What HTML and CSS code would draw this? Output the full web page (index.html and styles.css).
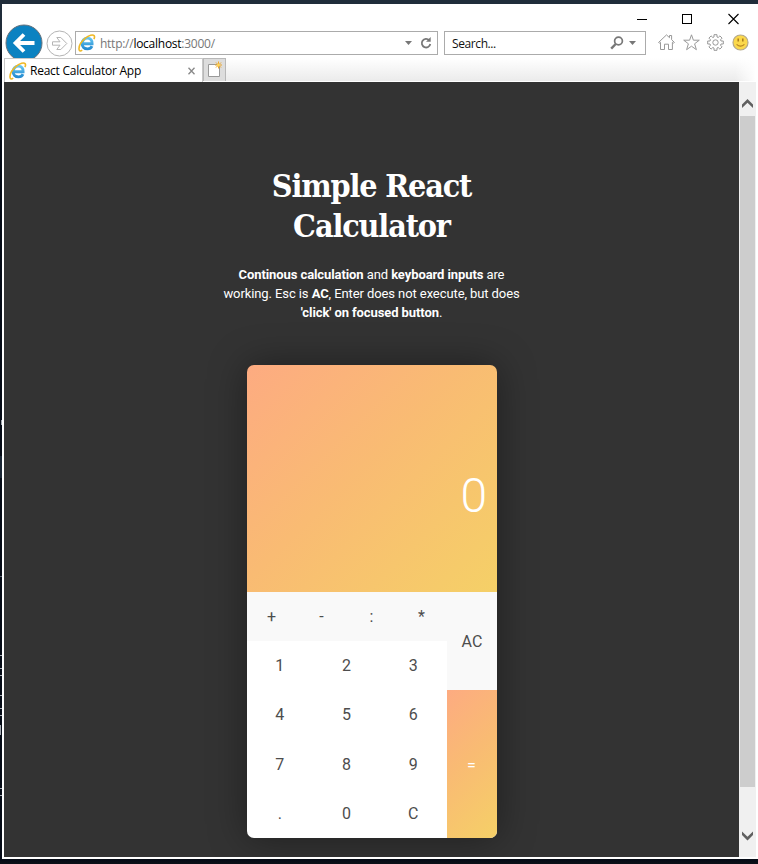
FILE: index.html
```html
<!DOCTYPE html>
<html lang="en">
<head>
<meta charset="utf-8">
<title>React Calculator App</title>
<link rel="stylesheet" href="styles.css">
</head>
<body>
<svg width="0" height="0" class="defs">
  <defs>
    <linearGradient id="ie" x1="0" y1="0" x2="0" y2="1"><stop offset="0" stop-color="#65c5f1"/><stop offset="1" stop-color="#258bd0"/></linearGradient>
    <symbol id="ie-logo" viewBox="0 0 18 18">
      <path d="M4.3 9.7H14.1C14.3 6.3 12.5 4.1 9.4 4.1C6.3 4.1 4.1 6.4 4.1 9.6C4.1 12.8 6.2 14.9 9.5 14.9C11.6 14.9 13.2 13.9 14 12.2" fill="none" stroke="url(#ie)" stroke-width="2.9"/>
      <path d="M4.2 16.1C2.5 17.4 1.1 17.2 1 15.3C.8 12.3 3.4 7.5 7.3 4.2C10.8 1.2 15 .1 16.2 1.8C16.8 2.7 16.5 3.9 15.9 5.1" fill="none" stroke="#efb927" stroke-width="1.6"/>
    </symbol>
  </defs>
</svg>
<i class="speck s1"></i><i class="speck s2"></i><i class="speck s3"></i><i class="speck s4"></i><i class="speck s5"></i><i class="speck s6"></i><i class="speck s7"></i><i class="speck s9"></i><i class="speck s8"></i>
<div class="window">
  <header class="titlebar">
    <svg width="11" height="12" viewBox="0 0 11 12"><path d="M0 6.5H10" stroke="#000"/></svg>
    <svg width="11" height="12" viewBox="0 0 11 12"><rect x=".5" y="1.5" width="9" height="9" fill="none" stroke="#000"/></svg>
    <svg width="11" height="12" viewBox="0 0 11 12"><path d="M.5 1L10.5 11M10.5 1L.5 11" stroke="#000" stroke-width="1.1"/></svg>
  </header>
  <div class="toolbar">
    <svg class="back" width="38" height="38" viewBox="0 0 38 38"><circle cx="19" cy="19" r="18" fill="#0b82c1" stroke="#66717b"/><path d="M29.5 19H11M19 10.5L10.5 19L19 27.5" fill="none" stroke="#fff" stroke-width="3.8"/></svg>
    <svg class="forward" width="27" height="27" viewBox="0 0 27 27" fill="#fff" stroke="#b4b4b4"><circle cx="13.5" cy="13.5" r="12.5"/><path d="M6.5 11.8V15.2H14L10.8 19.5H14.8L20.8 13.5L14.8 7.5H10.8L14 11.8Z"/></svg>
    <div class="field address">
      <svg width="18" height="18"><use href="#ie-logo"/></svg>
      <span class="url">http://<b>localhost</b>:3000/</span>
      <svg class="caret" width="7" height="4"><path d="M0 0H7L3.5 4Z" fill="#777"/></svg>
      <svg width="12" height="14" viewBox="0 0 12 14"><path d="M9.2 4.2A4.3 4.3 0 1 0 10.3 8" fill="none" stroke="#777" stroke-width="1.8"/><path d="M6 5.8H10.7V1Z" fill="#777"/></svg>
    </div>
    <div class="field search">
      <span class="hint">Search...</span>
      <svg width="14" height="14" viewBox="0 0 14 14" fill="none" stroke="#777"><circle cx="8.5" cy="5" r="3.9" stroke-width="1.7"/><path d="M5.7 8L1.2 12.6" stroke-width="2.4"/></svg>
      <svg class="caret" width="7" height="4"><path d="M0 0H7L3.5 4Z" fill="#777"/></svg>
    </div>
    <div class="tools">
      <svg width="17" height="17" viewBox="0 0 17 17" fill="none" stroke="#999"><path d="M2.5 8.3L1.4 9.2L.6 8.4L8.5.9L11.5 3.7V1.5H13.6V5.7L16.4 8.4L15.6 9.2L14.4 8.3V15.5H10.5V10.2H6.5V15.5H2.5Z"/></svg>
      <svg width="17" height="17" viewBox="0 0 17 17" fill="none" stroke="#999"><path d="M8.5.8L10.4 6.2H16.3L11.6 9.8L13.4 15.7L8.5 12.2L3.6 15.7L5.4 9.8L.7 6.2H6.6Z"/></svg>
      <svg width="17" height="17" viewBox="0 0 17 17" fill="none" stroke="#999"><path d="M7 .7H10V3L11.2 3.5L12.9 1.9L15.1 4.1L13.5 5.8L14 7H16.3V10H14L13.5 11.2L15.1 12.9L12.9 15.1L11.2 13.5L10 14V16.3H7V14L5.8 13.5L4.1 15.1L1.9 12.9L3.5 11.2L3 10H.7V7H3L3.5 5.8L1.9 4.1L4.1 1.9L5.8 3.5L7 3Z"/><circle cx="8.5" cy="8.5" r="2.7"/></svg>
      <svg width="17" height="17" viewBox="0 0 17 17"><circle cx="8.5" cy="8.5" r="7.5" fill="#fbd84b" stroke="#b5a98a" stroke-width="1.2"/><path d="M6.2 4.6V7.6M10.8 4.6V7.6" stroke="#a87a1c" stroke-width="1.5"/><path d="M4.6 10.4Q8.5 13.8 12.4 10.4" fill="none" stroke="#b5821f" stroke-width="1.1"/></svg>
    </div>
  </div>
  <nav class="tabs">
    <div class="tab"><svg width="18" height="18"><use href="#ie-logo"/></svg><span class="tabname">React Calculator App</span><svg class="close" width="7" height="8" viewBox="0 0 7 8"><path d="M.5 .8L6.5 7.2M6.5 .8L.5 7.2" stroke="#888" stroke-width="1.3"/></svg></div>
    <div class="newtab"><svg width="16" height="17" viewBox="0 0 16 17"><path d="M1.5 3.5H12.5V15.5H1.5Z" fill="#fff" stroke="#999"/><path d="M11.5 .5V7.5M8 4H15M9 1.5L14 6.5M14 1.5L9 6.5" stroke="#eba52b"/><circle cx="11.5" cy="4" r="1.6" fill="#ffd45a"/></svg></div>
    <div class="strip"></div>
  </nav>
  <div class="viewport">
    <main class="page">
      <h1>Simple React Calculator</h1>
      <p class="intro"><b>Continous calculation</b> and <b>keyboard inputs</b> are<br>working. Esc is <b>AC</b>, Enter does not execute, but does<br><b>'click' on focused button</b>.</p>
      <section class="calculator">
        <div class="display">0</div>
        <div class="keys">
          <div class="main-keys">
            <div class="operators"><button>+</button><button>-</button><button>:</button><button>*</button></div>
            <div class="digits"><button>1</button><button>2</button><button>3</button><button>4</button><button>5</button><button>6</button><button>7</button><button>8</button><button>9</button><button>.</button><button>0</button><button>C</button></div>
          </div>
          <div class="side-keys"><button class="clear">AC</button><button class="equals">=</button></div>
        </div>
      </section>
    </main>
    <aside class="scrollbar">
      <svg width="11" height="10" viewBox="0 0 11 10"><path d="M0 9V5.4L5.5 0L11 5.4V9L5.5 3.8Z" fill="#606060"/></svg>
      <div class="thumb"></div>
      <svg class="down" width="11" height="10" viewBox="0 0 11 10"><path d="M0 .5V4.1L5.5 9.5L11 4.1V.5L5.5 5.7Z" fill="#606060"/></svg>
    </aside>
  </div>
</div>
</body>
</html>
```
FILE: styles.css
```css
* { box-sizing: border-box; }
body {
  margin: 0;
  height: 864px;
  padding: 4px 0 0 2px;
  overflow: hidden;
  background: linear-gradient(#202d3a 0, #202d3a 30px, #050b16 60px, #050b16 860px, #0c1118 864px);
  font-family: Roboto, sans-serif;
}
.defs { position: absolute; }
svg { display: block; flex: none; }
.speck { position: absolute; left: 0; width: 2px; height: 1px; background: #a3a8b0; }
.s1 { top: 420px; height: 5px; left: 1px; width: 1px; }
.s2 { top: 456px; height: 22px; background: #1a2634; }
.s3 { top: 576px; background: #59616c; }
.s4 { top: 655px; }
.s5 { top: 668px; height: 8px; border: solid #a3a8b0; border-width: 1px 0; background: none; }
.s6 { top: 695px; }
.s7 { top: 708px; height: 8px; border: solid #a3a8b0; border-width: 1px 0; background: none; }
.s8 { top: 788px; height: 8px; border: solid #a3a8b0; border-width: 1px 0; background: none; }
.s9 { top: 725px; height: 10px; width: 1px; }
.window { height: 855px; background: #fff; display: flex; flex-direction: column; }

.titlebar { height: 27px; flex: none; display: flex; justify-content: flex-end; gap: 34.5px; padding: 9px 19.5px 0 0; }
.toolbar { height: 24px; flex: none; display: flex; position: relative; padding-left: 73px; font: 12px "Open Sans", sans-serif; }
.back { position: absolute; left: 3px; top: -7px; }
.forward { position: absolute; left: 44px; top: -1px; }
.field { height: 24px; border: 1px solid #ababab; background: #fff; display: flex; align-items: center; }
.address { width: 363px; padding: 0 5px 0 2px; margin-right: 6px; }
.url { flex: 1; margin-left: 4px; color: #777; letter-spacing: -.26px; }
.url b { color: #000; font-weight: 400; }
.address .caret { margin-right: 8px; }
.search { width: 202px; padding: 0 9px 0 7px; }
.hint { flex: 1; color: #111; letter-spacing: -.4px; }
.search .caret { margin-left: 5px; }
.tools { display: flex; gap: 7.5px; padding: 3px 0 0 12px; }

.tabs { height: 24px; margin-top: 3px; flex: none; display: flex; position: relative; z-index: 1; padding: 0 2px; }
.tab { width: 199px; border: 1px solid #c8c8c8; border-bottom: 0; background: #fff; display: flex; align-items: center; padding: 0 7px 0 4px; font: 12px "Open Sans", sans-serif; color: #000; }
.tabname { flex: 1; margin-left: 3px; letter-spacing: -.24px; }
.newtab { width: 23px; height: 23px; border: 1px solid #b8b8b8; border-bottom: 0; background: #ddd; padding: 2px 0 0 3px; }
.strip { flex: 1; height: 23px; background: linear-gradient(90deg, transparent 96%, #fff), linear-gradient(#fff, #ebebeb); }

.viewport { height: 775px; flex: none; display: flex; padding: 0 2px; }
.page { flex: 1; background: #333; color: #fff; text-align: center; padding-top: 84px; overflow: hidden; display: flex; flex-direction: column; align-items: center; }
h1 { margin: 0; width: 250px; font: 700 32px/40px "Roboto Slab", "DejaVu Serif Condensed", "DejaVu Serif", serif; font-stretch: condensed; letter-spacing: -1.15px; }
.intro { margin: 19px 0 43px; font-size: 13px; line-height: 19px; letter-spacing: -.09px; white-space: nowrap; }
.calculator { width: 250px; height: 473px; margin-left: 1px; border-radius: 7px; box-shadow: 0 0 38px rgba(0, 0, 0, .4); overflow: hidden; flex: none; }
.display { height: 227px; padding: 103px 10px 0 0; background: linear-gradient(135deg, #fdab81, #f9bb73 45%, #f5d067); text-align: right; font-size: 48px; line-height: 56px; font-weight: 300; }
.keys { height: 246px; display: flex; background: #fff; }
.main-keys { width: 200px; }
button { border: 0; margin: 0; padding: 0 1px 0 0; background: none; color: #4d4d4d; font: 16px Roboto, sans-serif; }
.operators { height: 49px; display: grid; grid-template-columns: repeat(4, 1fr); background: #f9f9f9; }
.digits { height: 197px; display: grid; grid-template: repeat(4, 1fr) / repeat(3, 1fr); }
.side-keys { width: 50px; display: grid; grid-template-rows: 98px 148px; }
.clear { background: #f9f9f9; padding: 0; }
.equals { background: linear-gradient(135deg, #fdab81, #f9bb73 45%, #f5d067); color: #fff; padding-top: 2px; }
.scrollbar { width: 17px; background: #f0f0f0; display: flex; flex-direction: column; align-items: center; padding: 17px 0 16px; }
.thumb { width: 15px; height: 671px; margin-top: 7px; background: #cdcdcd; flex: none; }
.down { margin-top: auto; }
```
